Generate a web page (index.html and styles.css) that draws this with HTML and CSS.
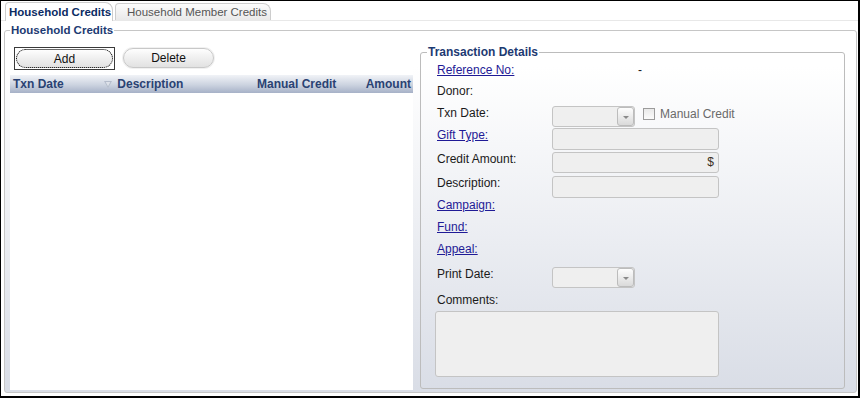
FILE: index.html
```html
<!DOCTYPE html>
<html lang="en">
<head>
    <meta charset="UTF-8">
    <title>Household Credits</title>
    <link rel="stylesheet" href="styles.css">
</head>
<body>

<div class="window">
    <div class="tabs">
        <div class="tab active">Household Credits</div>
        <div class="tab">Household Member Credits</div>
    </div>

    <fieldset class="group">
        <legend>Household Credits</legend>
        <div class="group-body">

            <div class="list">
                <div class="toolbar">
                    <span class="focus-ring"><button class="btn btn-add">Add</button></span>
                    <button class="btn btn-delete">Delete</button>
                </div>
                <div class="grid-head">
                    <div class="col col-date">Txn Date</div>
                    <div class="col col-desc">
                        <svg class="sort" width="8" height="7" viewBox="0 0 8 7"><path d="M0 0 H8 L4 7 Z" fill="#b4bccb"/><path d="M1.6 1 H6.4 L4 5.2 Z" fill="#dde1e9"/></svg>
                        Description
                    </div>
                    <div class="col col-manual">Manual Credit</div>
                    <div class="col col-amount">Amount</div>
                </div>
                <div class="grid-body"></div>
            </div>

            <fieldset class="details">
                <legend>Transaction Details</legend>

                <div class="row h21">
                    <span class="label"><a href="#">Reference No:</a></span>
                    <span class="value">-</span>
                </div>
                <div class="row">
                    <span class="label">Donor:</span>
                </div>
                <div class="row">
                    <span class="label">Txn Date:</span>
                    <div class="combo"><span class="drop"></span></div>
                    <span class="check"></span>
                    <span class="check-label">Manual Credit</span>
                </div>
                <div class="row h24">
                    <span class="label"><a href="#">Gift Type:</a></span>
                    <div class="field"></div>
                </div>
                <div class="row h24">
                    <span class="label">Credit Amount:</span>
                    <div class="field money">$</div>
                </div>
                <div class="row">
                    <span class="label">Description:</span>
                    <div class="field"></div>
                </div>
                <div class="row">
                    <span class="label"><a href="#">Campaign:</a></span>
                </div>
                <div class="row">
                    <span class="label"><a href="#">Fund:</a></span>
                </div>
                <div class="row h25">
                    <span class="label"><a href="#">Appeal:</a></span>
                </div>
                <div class="row h26">
                    <span class="label">Print Date:</span>
                    <div class="combo"><span class="drop"></span></div>
                </div>
                <div class="row h18">
                    <span class="label">Comments:</span>
                </div>
                <div class="comments"></div>
            </fieldset>

        </div>
    </fieldset>
</div>

</body>
</html>
```

FILE: styles.css
```css
body {
    margin: 0;
    font-family: "Liberation Sans", Arial, sans-serif;
    font-size: 12px;
    color: #1a1a1a;
}
.window {
    width: 860px;
    height: 398px;
    box-sizing: border-box;
    border: 1px solid #000;
    border-right-width: 2px;
    border-bottom-width: 2px;
    background: #fff;
}

/* tabs */
.tabs {
    display: flex;
    align-items: flex-end;
    height: 19px;
    border-bottom: 1px solid #e8e8e8;
}
.tab {
    height: 17px;
    width: 156px;
    margin-left: 2px;
    padding: 0 0 0 11px;
    box-sizing: border-box;
    border: 1px solid #cdcdcd;
    border-bottom: none;
    border-radius: 4px 8px 0 0;
    background: linear-gradient(#fcfcfc, #e9e9e9);
    color: #555;
    font-size: 11.5px;
    line-height: 17px;
    white-space: nowrap;
    overflow: hidden;
}
.tab.active {
    width: 108px;
    height: 19px;
    margin-left: 4px;
    margin-bottom: -1px;
    padding: 0 3px;
    background: #fff;
    color: #0b2b63;
    font-size: 11.5px;
    font-weight: bold;
    line-height: 18px;
}

/* outer group */
.group {
    margin: 2px 1px 0 3px;
    padding: 10px 11px 2px 5px;
    border: 1px solid #c6c6c6;
    border-radius: 3px;
    background: linear-gradient(#fff 10%, #d9dde6);
    min-width: 0;
}
.group legend {
    padding: 0 1px;
    font-size: 11.5px;
    font-weight: bold;
    line-height: 14px;
    color: #1d3a72;
}
.group-body {
    display: flex;
    align-items: flex-start;
    height: 343px;
}

/* left list */
.list {
    width: 403px;
    height: 343px;
    display: flex;
    flex-direction: column;
    background: #fff;
}
.toolbar {
    display: flex;
    align-items: flex-start;
    height: 23px;
    margin: 0 0 5px 4px;
}
.focus-ring {
    display: block;
    border: 1px solid #3a3a3a;
    padding: 1px;
}
.btn {
    display: block;
    height: 19px;
    padding: 0;
    border: 1px solid #c8c8c8;
    border-radius: 10px;
    background: linear-gradient(#fefefe, #efefef 50%, #e2e2e2);
    font-family: "Liberation Sans", Arial, sans-serif;
    font-size: 12px;
    color: #111;
}
.btn-add {
    width: 97px;
    outline: 1px dotted #111;
    outline-offset: -1px;
}
.btn-delete {
    width: 91px;
    height: 20px;
    margin: 1px 0 0 8px;
    box-shadow: 0 0 0 1px #f1f1f1;
}
.grid-head {
    display: flex;
    height: 18px;
    background: linear-gradient(#f1f3f7, #ccd3e0 55%, #a6b1c7);
    color: #2a4273;
    font-weight: bold;
    line-height: 19px;
    white-space: nowrap;
}
.col-date {
    width: 88px;
    padding-left: 3px;
}
.col-desc {
    width: 150px;
    padding-left: 3px;
}
.sort {
    margin-right: 2px;
}
.col-manual {
    width: 107px;
    padding-left: 3px;
}
.col-amount {
    flex: 1;
    text-align: right;
    padding-right: 2px;
}
.grid-body {
    flex: 1;
}

/* transaction details */
.details {
    width: 425px;
    height: 344px;
    box-sizing: border-box;
    margin: -2px 0 0 7px;
    padding: 4px 0 0 6px;
    border: 1px solid #bcbcbc;
    border-radius: 3px;
    min-width: 0;
}
.details legend {
    padding: 0 1px;
    font-size: 12px;
    font-weight: bold;
    line-height: 14px;
    color: #1d3a72;
}
.row {
    display: flex;
    align-items: flex-start;
    height: 22px;
    padding-left: 10px;
}
.row.h18 { height: 18px; }
.row.h21 { height: 21px; }
.row.h24 { height: 24px; }
.row.h25 { height: 25px; }
.row.h26 { height: 26px; }
.label {
    width: 115px;
    flex: none;
    line-height: 14px;
    color: #1a1a1a;
}
.label a {
    color: #1f1a96;
}
.value {
    margin-left: 86px;
    line-height: 14px;
}
.combo {
    position: relative;
    width: 83px;
    height: 21px;
    box-sizing: border-box;
    border: 1px solid #c4c4c4;
    border-radius: 3px;
    background: #efefef;
}
.drop {
    position: absolute;
    right: 0;
    top: 0;
    width: 17px;
    height: 19px;
    box-sizing: border-box;
    border: 1px solid #bcbcbc;
    border-radius: 3px;
    background: linear-gradient(#fdfdfd, #dadada);
}
.drop::after {
    content: "";
    position: absolute;
    left: 5px;
    top: 8px;
    border-left: 3px solid transparent;
    border-right: 3px solid transparent;
    border-top: 3px solid #8a8a8a;
}
.check {
    width: 12px;
    height: 12px;
    box-sizing: border-box;
    margin: 2px 0 0 8px;
    border: 1px solid #9b9b9b;
    background: linear-gradient(#e9e9e9, #fbfbfb);
}
.check-label {
    margin-left: 5px;
    line-height: 17px;
    color: #6a6a6a;
}
.field {
    width: 167px;
    height: 22px;
    box-sizing: border-box;
    border: 1px solid #c4c4c4;
    border-radius: 3px;
    background: #efefef;
}
.money {
    height: 21px;
    padding-right: 4px;
    text-align: right;
    line-height: 19px;
    color: #3b3024;
}
.comments {
    width: 284px;
    height: 66px;
    box-sizing: border-box;
    margin-left: 8px;
    border: 1px solid #c4c4c4;
    border-radius: 3px;
    background: #efefef;
}
```
